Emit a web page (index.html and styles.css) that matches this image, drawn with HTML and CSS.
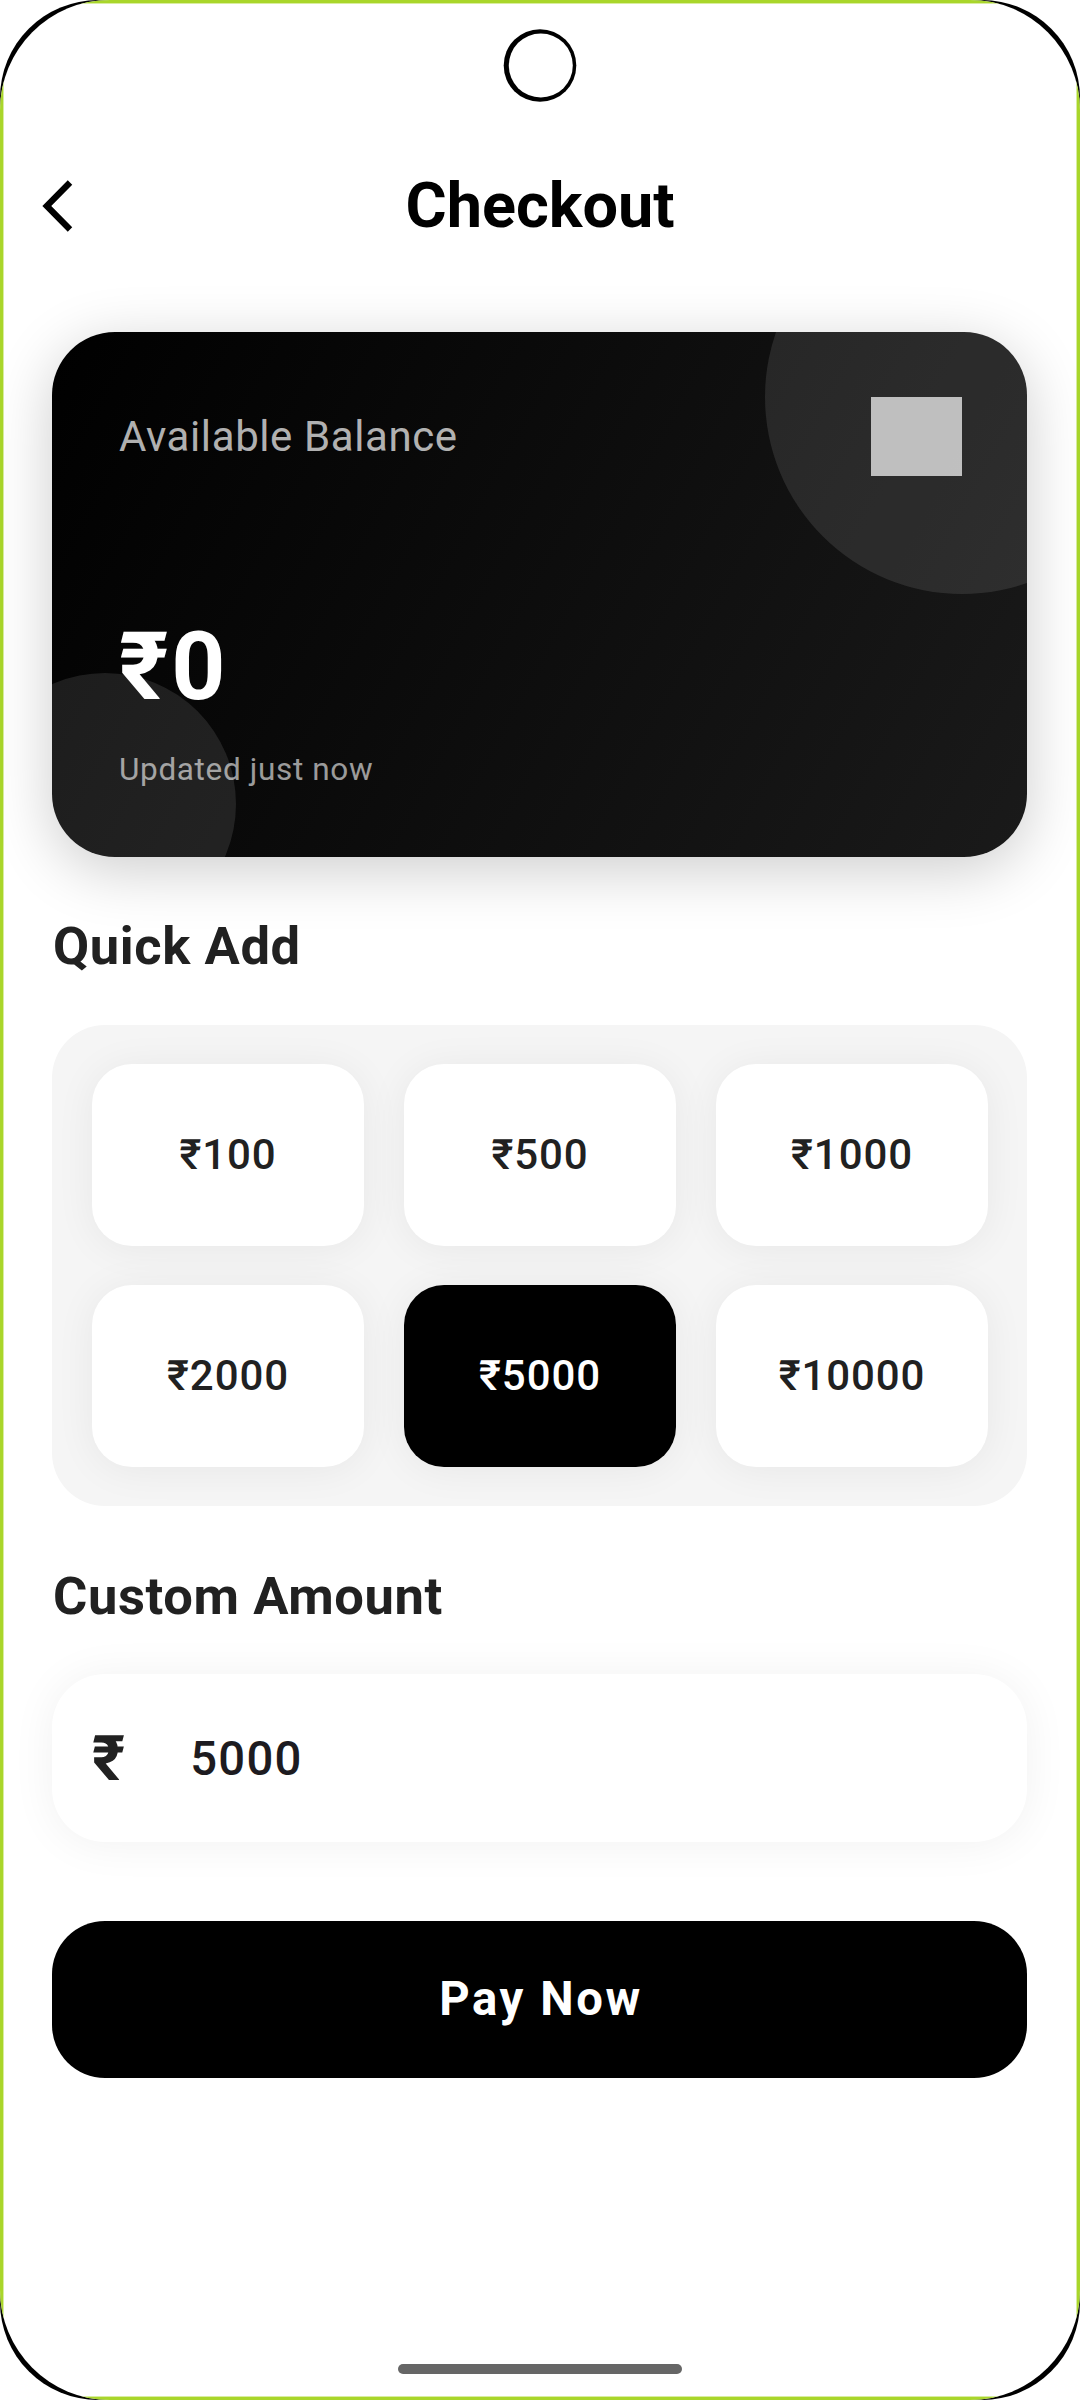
FILE: index.html
```html
<!DOCTYPE html>
<html lang="en">
<head>
<meta charset="utf-8">
<title>Checkout</title>
<link rel="stylesheet" href="styles.css">
</head>
<body>
<div class="device">
  <div class="screen">
    <div class="edge">
      <header class="app-bar">
        <svg class="back" width="36" height="56" viewBox="0 0 36 56"><path d="M31 4.5 7.8 28 31 51.5" fill="none" stroke="#000" stroke-width="6.3"/></svg>
        <h1 class="title">Checkout</h1>
      </header>
      <main class="content">
        <section class="balance-card">
          <div class="bubble bubble-large"></div>
          <div class="bubble bubble-small"></div>
          <div class="balance-top">
            <span class="balance-label">Available Balance</span>
            <span class="chip-mark"></span>
          </div>
          <div class="balance-value">₹0</div>
          <div class="balance-note">Updated just now</div>
        </section>

        <h2 class="section-title">Quick Add</h2>
        <section class="amounts">
          <button class="amount">₹100</button>
          <button class="amount">₹500</button>
          <button class="amount">₹1000</button>
          <button class="amount">₹2000</button>
          <button class="amount selected">₹5000</button>
          <button class="amount">₹10000</button>
        </section>

        <h2 class="section-title">Custom Amount</h2>
        <div class="field">
          <span class="currency">₹</span>
          <span class="field-value">5000</span>
        </div>

        <button class="pay">Pay Now</button>
      </main>
    </div>
  </div>
  <svg class="camera" width="76" height="76" viewBox="0 0 76 76"><circle cx="38" cy="38.5" r="36.3"/><circle cx="38.8" cy="38.5" r="32" fill="#fff"/></svg>
  <div class="home-pill"></div>
</div>
</body>
</html>
```
FILE: styles.css
```css
* { box-sizing: border-box; }

body {
  margin: 0;
  background: #fff;
  font-family: Roboto, "Noto Sans", sans-serif;
  color: #212121;
}

button {
  border: 0;
  padding: 0;
  font: inherit;
  color: inherit;
}

.device {
  position: relative;
  width: 1080px;
  height: 2400px;
  background: #000;
  border-radius: 98px;
  overflow: hidden;
}

.screen {
  height: 100%;
  border-radius: 110px;
  overflow: hidden;
}

.edge {
  height: 100%;
  border: 3px solid #a9d62b;
  background: #fff;
  box-shadow: inset 0 0 0 1px #d9eda0;
  padding-top: 129px;
}

.app-bar {
  display: grid;
  grid-template-columns: 140px 1fr 140px;
  align-items: center;
  height: 147px;
}

.back { margin-left: 36px; }

.title {
  margin: 0;
  text-align: center;
  font-size: 63px;
  font-weight: 700;
  line-height: 74px;
  color: #000;
}

.content {
  display: flex;
  flex-direction: column;
  padding: 53px 50px 0 49px;
}

.balance-card {
  position: relative;
  height: 525px;
  padding: 65px 65px 0 67px;
  border-radius: 63px;
  overflow: hidden;
  background: linear-gradient(118.3deg, #000, #1a1a1a);
  box-shadow: 0 13px 61px rgba(0, 0, 0, 0.2);
}

.bubble {
  position: absolute;
  border-radius: 50%;
  background: rgba(255, 255, 255, 0.1);
}

.bubble-large {
  width: 394px;
  height: 394px;
  top: -132px;
  right: -132px;
}

.bubble-small {
  width: 262px;
  height: 262px;
  left: -78px;
  bottom: -78px;
}

.balance-top {
  position: relative;
  display: flex;
  align-items: center;
  justify-content: space-between;
  height: 79px;
}

.balance-label {
  font-size: 42px;
  letter-spacing: 0.6px;
  color: rgba(255, 255, 255, 0.7);
}

.chip-mark {
  width: 91px;
  height: 79px;
  background: rgba(255, 255, 255, 0.7);
}

.balance-value {
  position: relative;
  margin-top: 135px;
  font-size: 94.5px;
  font-weight: 700;
  letter-spacing: 2.6px;
  line-height: 112px;
  color: #fff;
}

.balance-note {
  position: relative;
  margin-top: 28px;
  font-size: 31.5px;
  letter-spacing: 0.65px;
  line-height: 38px;
  color: rgba(255, 255, 255, 0.6);
}

.section-title {
  margin: 58px 0 48px;
  padding-left: 1px;
  font-size: 52.5px;
  font-weight: 700;
  letter-spacing: 0.6px;
  line-height: 62px;
}

.amounts + .section-title {
  margin: 59px 0 47px;
}

.amounts {
  display: grid;
  grid-template-columns: repeat(3, 1fr);
  grid-auto-rows: 182px;
  gap: 39px 40px;
  padding: 39px 39px 39px 40px;
  border-radius: 53px;
  background: #f5f5f5;
}

.amount {
  padding-bottom: 2px;
  border-radius: 40px;
  background: #fff;
  box-shadow: 0 3px 40px rgba(0, 0, 0, 0.06);
  font-size: 42px;
  font-weight: 500;
  letter-spacing: 0.9px;
}

.amount.selected {
  background: #000;
  color: #fff;
}

.field {
  display: flex;
  align-items: center;
  gap: 65px;
  height: 168px;
  padding: 0 39px 0 40px;
  border-radius: 53px;
  background: #fff;
  box-shadow: 0 2px 45px rgba(0, 0, 0, 0.06);
}

.currency {
  font-size: 63px;
  font-weight: 700;
}

.field-value {
  padding-top: 1px;
  font-size: 47.25px;
  font-weight: 500;
  letter-spacing: 1.3px;
  color: #1d1b20;
}

.pay {
  margin-top: 79px;
  height: 157px;
  padding: 0 0 2px 3px;
  border-radius: 53px;
  background: #000;
  color: #fff;
  font-size: 47.25px;
  font-weight: 700;
  letter-spacing: 2.6px;
}

.camera {
  position: absolute;
  left: 502px;
  top: 27px;
}

.home-pill {
  position: absolute;
  left: 398px;
  top: 2364px;
  width: 284px;
  height: 10px;
  border-radius: 5px;
  background: #666;
}
```
